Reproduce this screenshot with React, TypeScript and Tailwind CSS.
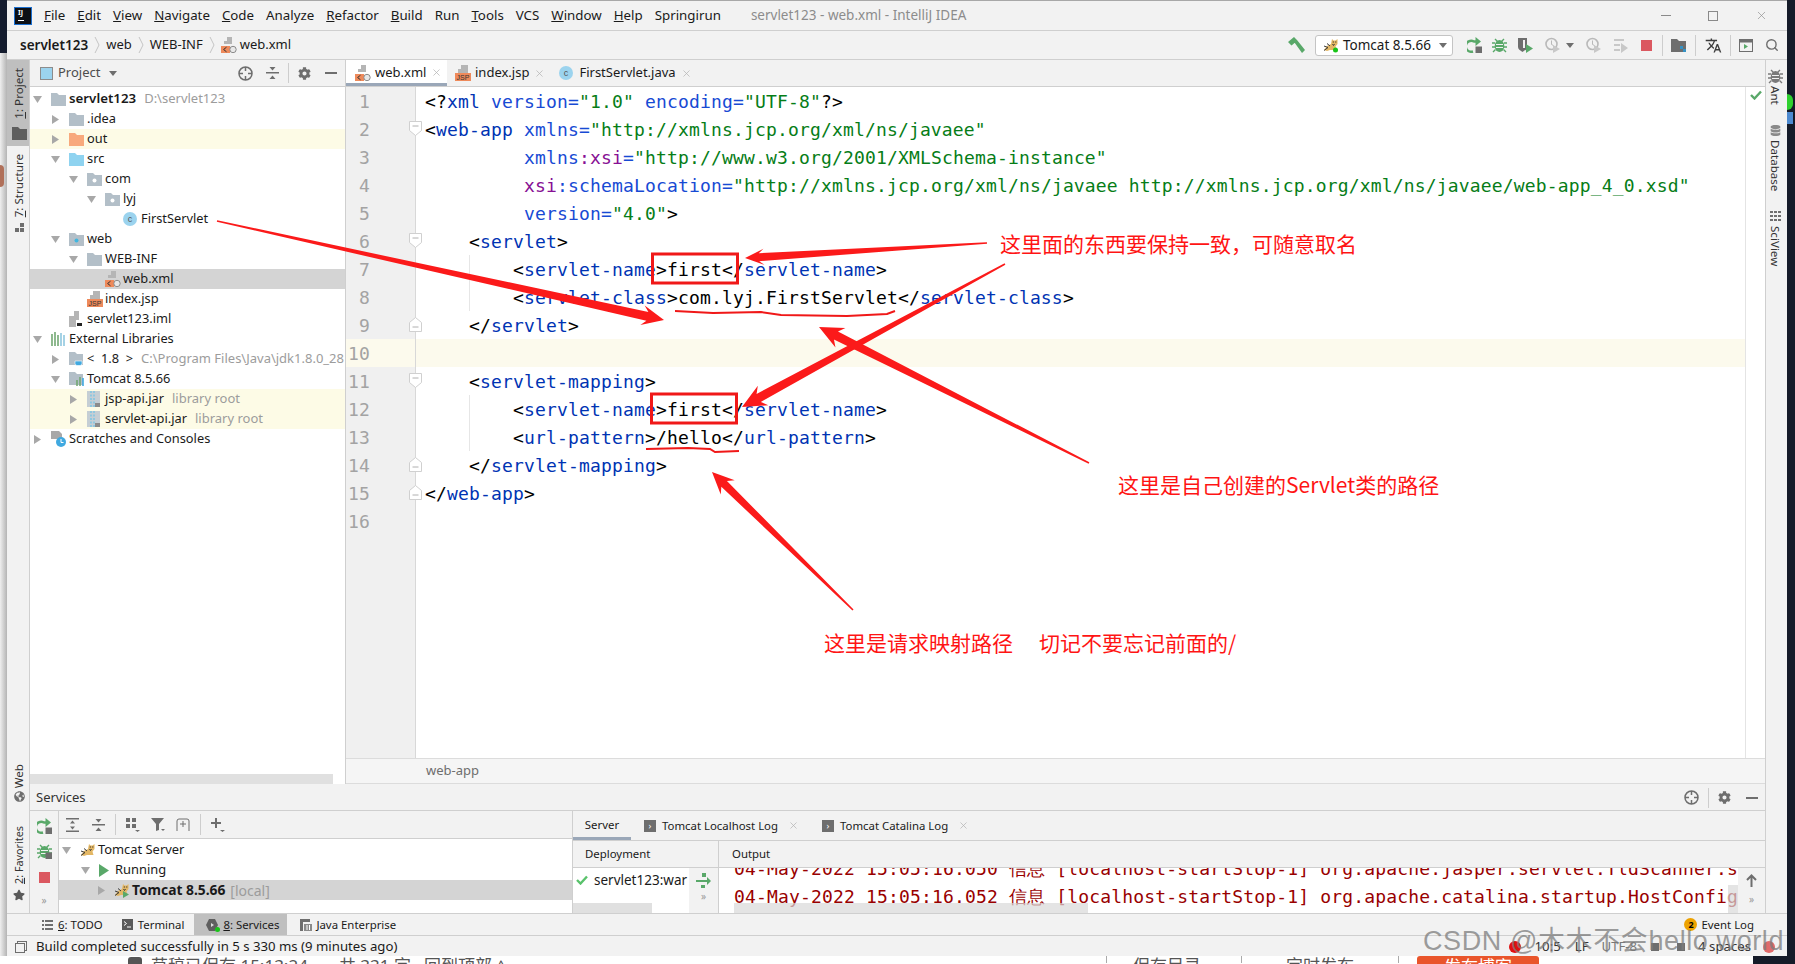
import { ReactNode } from "react";
import { FaCog, FaDatabase, FaGlobeAmericas, FaStar } from "react-icons/fa";
import { MdTranslate } from "react-icons/md";
import { Search, X } from "lucide-react";

const GRAY = "#6e6e6e";

// ---------- small drawn icons ----------
const Arrow = ({ open, className = "" }: { open?: boolean; className?: string }) => (
  <svg width="9" height="9" viewBox="0 0 9 9" className={className}>
    {open ? <path d="M0 1h9L4.5 8z" fill="#a8a8a8" /> : <path d="M1 0l7 4.5L1 9z" fill="#a8a8a8" />}
  </svg>
);

const Folder = ({ color = "#b3bfc8", dot }: { color?: string; dot?: string }) => (
  <svg width="15" height="13" viewBox="0 0 15 13">
    <path d="M0 0h6l2 2h7v11H0z" fill={color} />
    {dot && <circle cx="7.5" cy="7.5" r="2" fill={dot} />}
  </svg>
);

const XmlIcon = () => (
  <svg width="16" height="16" viewBox="0 0 16 16">
    <path d="M6 0h5v6H6zM3 4h8v3H3z" fill="#b5b5b5" />
    <rect x="0" y="9" width="9" height="7" fill="#ee8a5b" />
    <path d="M5.5 10.2L2.6 12.5l2.9 2.3" stroke="#333" strokeWidth="1" fill="none" />
    <circle cx="12" cy="12.5" r="3.2" fill="#e8e8e8" stroke="#8a8a8a" />
  </svg>
);

const JspIcon = () => (
  <svg width="16" height="16" viewBox="0 0 16 16">
    <path d="M6 0h7v8H6zM3 4h10v4H3z" fill="#b5b5b5" />
    <rect x="0" y="8" width="16" height="8" fill="#ee8a5b" />
    <text x="8" y="15" fontSize="7" textAnchor="middle" fill="#333" fontFamily="Liberation Sans">JSP</text>
  </svg>
);

const ClassIcon = () => (
  <svg width="14" height="14" viewBox="0 0 14 14">
    <circle cx="7" cy="7" r="7" fill="#9bd3ee" />
    <text x="7" y="10" fontSize="9" textAnchor="middle" fill="#555" fontFamily="Liberation Sans">c</text>
  </svg>
);

const ImlIcon = () => (
  <svg width="14" height="16" viewBox="0 0 14 16">
    <path d="M5 0h5v16H0V5h5z" fill="#b5b5b5" />
    <rect x="7" y="9" width="7" height="7" fill="#fff" />
    <rect x="8" y="12" width="5" height="3" fill="#222" />
  </svg>
);

const JarIcon = () => (
  <svg width="13" height="16" viewBox="0 0 13 16">
    <rect width="13" height="16" fill="#c5ced4" />
    <path d="M4 0v16M7 0v16" stroke="#8fc7df" strokeWidth="2" strokeDasharray="2 1.5" />
    <rect x="8" y="12" width="5" height="4" fill="#8c8c8c" />
  </svg>
);

const LibIcon = () => (
  <svg width="15" height="14" viewBox="0 0 15 14">
    <path d="M1 2v12M4 0v14M7 3v11" stroke="#73a873" strokeWidth="1.6" />
    <path d="M10 1v13M13 3v11" stroke="#8fc7df" strokeWidth="1.6" />
  </svg>
);

const JdkIcon = () => (
  <svg width="15" height="15" viewBox="0 0 15 15">
    <path d="M0 0h6l2 2h6v11H0z" fill="#b3bfc8" />
    <path d="M6 9h7v2.500a2 2 0 0 1-2 2H8a2 2 0 0 1-2-2z" fill="#40a9e0" stroke="#fff" strokeWidth=".6" />
  </svg>
);

const TomcatFolderIcon = () => (
  <svg width="15" height="14" viewBox="0 0 15 14">
    <path d="M0 0h6l2 2h6v11H0z" fill="#b3bfc8" />
    <path d="M8 8v6M11 5v9" stroke="#73a873" strokeWidth="1.6" />
    <path d="M14 6v8" stroke="#40a9e0" strokeWidth="1.6" />
  </svg>
);

// the cat: tan body, head with two ears at upper right, dark stripes
const TomcatIcon = ({ run, play }: { run?: boolean; play?: boolean }) => (
  <svg width="16" height="16" viewBox="0 0 16 16">
    <path d="M9 2l1.500 1.500h2L14.500 2v5l-2 2.500 1 3.500H7L4 14 1 13l3-4 4-2z" fill="#e3b765" />
    <path d="M1 13.500l4-3M1 9l4 1.500M4 6.500l3 2.500M9.500 7l1 1.500 1-1.500" stroke="#3a3a3a" strokeWidth="1" fill="none" />
    <path d="M9.800 5h1M12.300 5h1" stroke="#222" strokeWidth="1" />
    {run && <circle cx="12.5" cy="13" r="2.5" fill="#18c418" />}
    {play && <path d="M9 9l6 3.500L9 16z" fill="#59a869" />}
  </svg>
);

const Bug = ({ color = "#59a869", box }: { color?: string; box?: boolean }) => (
  <svg width="15" height="15" viewBox="0 0 15 15">
    <path d="M3 1l2.500 2.500M12 1L9.500 3.500M0 5h3M15 5h-3M0 9h3M15 9h-3M1 14l2.500-2.500M14 14l-2.500-2.500" stroke={color} strokeWidth="1.4" />
    <ellipse cx="7.5" cy="8" rx="4.800" ry="6" fill={color} />
    <path d="M4 6.500h7M4 9.500h7" stroke="#f2f2f2" strokeWidth="1" />
    {box && <rect x="8.500" y="8.500" width="6.500" height="6.500" fill="#6e6e6e" />}
  </svg>
);

const Crosshair = () => (
  <svg width="15" height="15" viewBox="0 0 15 15" fill="none" stroke={GRAY} strokeWidth="1.5">
    <circle cx="7.5" cy="7.5" r="6.5" />
    <path d="M7.5 1v4M7.5 10v4M1 7.5h4M10 7.5h4" />
  </svg>
);

const CollapseAll = () => (
  <svg width="13" height="14" viewBox="0 0 13 14" fill={GRAY}>
    <rect y="6" width="13" height="1.5" />
    <path d="M3.5 1h6L6.5 4.5zM3.5 13h6l-3-3.5z" />
  </svg>
);

const ExpandAll = () => (
  <svg width="13" height="14" viewBox="0 0 13 14" fill={GRAY}>
    <rect width="13" height="1.5" />
    <rect y="12.5" width="13" height="1.5" />
    <path d="M4 5.5h5L6.5 2.5zM4 8.5h5l-2.5 3z" />
  </svg>
);

const Minus = () => <span className="block h-[2px] w-3 bg-[#6e6e6e]" />;

const Restart = () => (
  <svg width="15" height="16" viewBox="0 0 15 16" fill="none">
    <path d="M6 14.500A5.500 5.500 0 1 1 7 4.500h3" stroke="#59a869" strokeWidth="2.400" />
    <path d="M8.500 0l5.500 4.500-5.500 4.500z" fill="#59a869" />
    <rect x="8.500" y="9.500" width="6.500" height="6.500" fill="#6e6e6e" />
  </svg>
);

const GrayClock = () => (
  <svg width="15" height="16" viewBox="0 0 15 16" fill="none">
    <circle cx="6.5" cy="7" r="5.5" stroke="#b9b9b9" strokeWidth="1.6" />
    <path d="M6.5 3.5v4l2 1" stroke="#b9b9b9" />
    <path d="M8 8l7 4-7 4z" fill="#c8c8c8" />
  </svg>
);

const Square = ({ size = "w-[11px] h-[11px]" }: { size?: string }) => <span className={`block bg-[#db5860] ${size}`} />;

const Caret = () => <span className="inline-block h-0 w-0 border-x-[4px] border-t-[5px] border-x-transparent border-t-[#6e6e6e]" />;

const Sep = ({ h = "h-[21px]" }: { h?: string }) => <span className={`block w-px bg-[#cdcdcd] ${h}`} />;

const Chev = () => (
  <svg width="6" height="16" viewBox="0 0 6 16" className="mx-[6px]" fill="none" stroke="#c4c4c4">
    <path d="M1 0l4 8-4 8" />
  </svg>
);

const CloseX = () => <X size={11} color="#b4b4b4" strokeWidth={1.6} />;

// ---------- top bars ----------
const MENU: [string, string][] = [
  ["F", "ile"], ["E", "dit"], ["V", "iew"], ["N", "avigate"], ["C", "ode"], ["", "Analyze"], ["R", "efactor"],
  ["B", "uild"], ["", "Run"], ["T", "ools"], ["", "VCS"], ["W", "indow"], ["H", "elp"], ["", "Springirun"],
];

const TitleBar = () => (
  <div className="flex h-[31px] shrink-0 items-center border-t border-b border-t-[#a8a8a8] border-b-[#cfcfcf] bg-[#f2f2f2] text-[13.3px] text-[#1a1a1a]">
    <div className="ml-2 mr-[13px] flex h-[16px] w-[16px] flex-col bg-[#0c0f14] pl-[3px] pt-[1px] text-[7px] font-bold leading-[8px] text-white outline outline-1 outline-[#1b6fd0]">
      IJ<span className="mt-[3px] block h-px w-[6px] bg-white" />
    </div>
    <div className="flex gap-[12px]">
      {MENU.map(([u, rest]) => (
        <span key={rest}>
          {u && <u>{u}</u>}
          {rest}
        </span>
      ))}
    </div>
    <span className="ml-[30px] text-[13.5px] text-[#8c8c8c]">servlet123 - web.xml - IntelliJ IDEA</span>
    <div className="ml-auto mr-[19px] flex items-center gap-[37px]">
      <span className="block h-px w-[10px] bg-[#8a8a8a]" />
      <span className="block h-[10px] w-[10px] border border-[#8a8a8a]" />
      <X size={13} color="#8a8a8a" strokeWidth={1.2} />
    </div>
  </div>
);

const NavBar = () => (
  <div className="flex h-[29px] shrink-0 items-center border-b border-[#cfcfcf] bg-[#f2f2f2] pl-[13px] text-[13px] text-[#1a1a1a]">
    <b className="text-[13.5px] font-semibold">servlet123</b>
    <Chev />
    <span>web</span>
    <Chev />
    <span>WEB-INF</span>
    <Chev />
    <XmlIcon />
    <span className="ml-[3px]">web.xml</span>
    <div className="ml-auto flex items-center">
      <svg width="17" height="16" viewBox="0 0 17 16" fill="#59a869" className="mr-[10px]">
        <path d="M0 5l6-5 3.500 3.500-6 5zM6.500 5.500L9 3l8 10-3 3z" />
      </svg>
      <div className="mr-[14px] flex h-[21px] w-[138px] items-center rounded-[3px] border border-[#c4c4c4] bg-white pl-[7px] text-[13.5px]">
        <TomcatIcon run />
        <span className="ml-[4px]">Tomcat 8.5.66</span>
        <span className="ml-auto mr-[5px] flex"><Caret /></span>
      </div>
      <div className="flex items-center">
        <span className="mr-[10px] flex"><Restart /></span>
        <span className="mr-[11px] flex"><Bug /></span>
        <svg width="15" height="16" viewBox="0 0 15 16" className="mr-[12px]">
          <path d="M0 1h9v9c0 2-2 3.500-4.500 5C2 13.500 0 12 0 10z" fill="#6e6e6e" />
          <path d="M5 3h2v8H5z" fill="#f2f2f2" />
          <path d="M8 7l7 4.500L8 16z" fill="#59a869" />
        </svg>
        <span className="mr-[6px] flex"><GrayClock /></span>
        <span className="mr-[12px] flex"><Caret /></span>
        <span className="mr-[13px] flex"><GrayClock /></span>
        <svg width="14" height="15" viewBox="0 0 14 15" fill="#c8c8c8" className="mr-[13px]">
          <path d="M0 1h10v2H0zM0 6h6v2H0zM0 11h6v2H0zM7 5l7 5-7 5z" />
        </svg>
        <Square />
        <span className="ml-[10px] mr-[8px] flex"><Sep /></span>
        <svg width="15" height="13" viewBox="0 0 15 13">
          <path d="M0 0h6l2 2h7v11H0z" fill="#6e6e6e" />
          <path d="M9 7h3v3H9zM12 10h3v3h-3z" fill="#3592c4" />
        </svg>
        <span className="mx-[9px] flex"><Sep /></span>
        <MdTranslate size={17} color="#3d3d3d" />
        <span className="mx-[8px] flex"><Sep /></span>
        <svg width="14" height="13" viewBox="0 0 14 13" fill="none" className="mr-[12px]">
          <rect x=".5" y=".5" width="13" height="12" stroke={GRAY} />
          <rect x="1" y="1" width="12" height="2.5" fill={GRAY} />
          <path d="M5 5l4 2.5L5 10z" fill="#59a869" />
        </svg>
        <Search size={14} color={GRAY} strokeWidth={2.4} className="mr-[8px]" />
      </div>
    </div>
  </div>
);

// ---------- side tool strips ----------
const VText = ({ children, flip = true, size = "text-[11.6px]" }: { children: ReactNode; flip?: boolean; size?: string }) => (
  <span className={`block whitespace-nowrap text-[#333] [writing-mode:vertical-rl] ${size} ${flip ? "rotate-180" : ""}`}>{children}</span>
);

const LeftStrip = () => (
  <div className="flex w-[23px] shrink-0 flex-col items-stretch border-r border-[#cfcfcf] bg-[#f2f2f2]">
    <div className="flex h-[86px] flex-col items-center gap-[8px] bg-[#bfbfbf] pl-[2px] pt-[8px]">
      <VText><u>1</u>: Project</VText>
      <Folder color="#5e5e5e" />
    </div>
    <div className="mt-[8px] flex flex-col items-center gap-[6px] pl-[2px]">
      <VText><u>7</u>: Structure</VText>
      <svg width="9" height="9" viewBox="0 0 9 9" fill="#6e6e6e"><path d="M5 0h4v4H5zM0 5h4v4H0zM5 5h4v4H5z" /></svg>
    </div>
    <div className="mt-auto flex flex-col items-center gap-[3px] pb-[12px] pl-[2px]">
      <VText>Web</VText>
      <FaGlobeAmericas size={11} color={GRAY} className="mb-[21px]" />
      <VText size="text-[10.8px]"><u>2</u>: Favorites</VText>
      <FaStar size={12} color="#5a5a5a" className="mt-[2px]" />
    </div>
  </div>
);

const RightStrip = () => (
  <div className="flex w-[22px] shrink-0 flex-col items-center border-l border-[#cfcfcf] bg-[#f2f2f2] pr-[2px] pt-[9px]">
    <Bug color="#7a7a7a" />
    <span className="mt-[2px]"><VText flip={false}>Ant</VText></span>
    <FaDatabase size={11} color="#8a8a8a" className="mt-[20px]" />
    <span className="mt-[4px]"><VText flip={false}>Database</VText></span>
    <svg width="11" height="10" viewBox="0 0 11 10" className="mt-[20px]" fill="#6e6e6e">
      <path d="M0 0h3v2H0zM4 0h3v2H4zM8 0h3v2H8zM0 4h3v2H0zM4 4h3v2H4zM8 4h3v2H8zM0 8h3v2H0zM4 8h3v2H4zM8 8h3v2H8z" />
    </svg>
    <span className="mt-[5px]"><VText flip={false}>SciView</VText></span>
  </div>
);

// ---------- project tree ----------
type Row = {
  depth: 0 | 1 | 2 | 3 | 4;
  arrow?: "open" | "closed";
  icon: ReactNode;
  label: ReactNode;
  hint?: string;
  bg?: string;
};

const DEPTH_PAD = ["pl-[3px]", "pl-[21px]", "pl-[39px]", "pl-[57px]", "pl-[75px]"];

const ROWS: Row[] = [
  { depth: 0, arrow: "open", icon: <Folder />, label: <b className="text-[13.3px] font-semibold">servlet123</b>, hint: "D:\\servlet123" },
  { depth: 1, arrow: "closed", icon: <Folder />, label: ".idea" },
  { depth: 1, arrow: "closed", icon: <Folder color="#f8a97c" />, label: "out", bg: "bg-[#fdfbe6]" },
  { depth: 1, arrow: "open", icon: <Folder color="#8fd3f0" />, label: "src" },
  { depth: 2, arrow: "open", icon: <Folder dot="#fff" />, label: "com" },
  { depth: 3, arrow: "open", icon: <Folder dot="#fff" />, label: "lyj" },
  { depth: 4, icon: <ClassIcon />, label: "FirstServlet" },
  { depth: 1, arrow: "open", icon: <Folder dot="#40b6e0" />, label: "web" },
  { depth: 2, arrow: "open", icon: <Folder />, label: "WEB-INF" },
  { depth: 3, icon: <XmlIcon />, label: "web.xml", bg: "bg-[#d4d4d4]" },
  { depth: 2, icon: <JspIcon />, label: "index.jsp" },
  { depth: 1, icon: <ImlIcon />, label: "servlet123.iml" },
  { depth: 0, arrow: "open", icon: <LibIcon />, label: "External Libraries" },
  { depth: 1, arrow: "closed", icon: <JdkIcon />, label: "<\u00a0\u00a01.8\u00a0\u00a0>", hint: "C:\\Program Files\\Java\\jdk1.8.0_281" },
  { depth: 1, arrow: "open", icon: <TomcatFolderIcon />, label: "Tomcat 8.5.66" },
  { depth: 2, arrow: "closed", icon: <JarIcon />, label: "jsp-api.jar", hint: "library root", bg: "bg-[#fdfbe6]" },
  { depth: 2, arrow: "closed", icon: <JarIcon />, label: "servlet-api.jar", hint: "library root", bg: "bg-[#fdfbe6]" },
  {
    depth: 0,
    arrow: "closed",
    icon: (
      <svg width="15" height="16" viewBox="0 0 15 16">
        <path d="M0 0h8l3 3v5H0z" fill="#a8a8a8" />
        <circle cx="10" cy="11" r="5" fill="#40a9e0" />
        <path d="M10 8v3.5h2.5" stroke="#fff" fill="none" />
      </svg>
    ),
    label: "Scratches and Consoles",
  },
];

const ProjectPanel = () => (
  <div className="flex w-[316px] shrink-0 flex-col border-r border-[#cfcfcf] bg-white">
    <div className="flex h-[27px] shrink-0 items-center border-b border-[#cfcfcf] bg-[#f2f2f2] pl-[10px] text-[13px] text-[#4d4d4d]">
      <span className="h-[13px] w-[13px] border border-[#8c8c8c] bg-[#9bd3ee]" />
      <span className="ml-[5px]">Project</span>
      <span className="ml-[9px] flex"><Caret /></span>
      <div className="ml-auto mr-[8px] flex items-center">
        <Crosshair />
        <span className="ml-[13px]"><CollapseAll /></span>
        <span className="mx-[9px] flex"><Sep h="h-[20px]" /></span>
        <FaCog size={13} color={GRAY} />
        <span className="ml-[14px]"><Minus /></span>
      </div>
    </div>
    <div className="flex-1 overflow-hidden pt-[2px] text-[12.8px] text-[#1a1a1a]">
      {ROWS.map((r, i) => (
        <div key={i} className={`flex h-[20px] items-center whitespace-nowrap ${DEPTH_PAD[r.depth]} ${r.bg ?? ""}`}>
          <span className="flex w-[18px] shrink-0 justify-start">{r.arrow && <Arrow open={r.arrow === "open"} />}</span>
          <span className="flex w-[18px] shrink-0 items-center">{r.icon}</span>
          <span>{r.label}</span>
          {r.hint && <span className="ml-[8px] text-[13px] text-[#9c9c9c]">{r.hint}</span>}
        </div>
      ))}
    </div>
    <div className="h-[10px] w-[303px] shrink-0 bg-[#e0e0e0]" />
  </div>
);

// ---------- editor ----------
const TAG = "text-[#0033b3]";
const ATT = "text-[#174ad4]";
const STR = "text-[#067d17]";
const NSP = "text-[#871094]";

type Tok = [string, string?];
type Line = { toks: Tok[]; indent?: string; guide?: boolean; fold?: "open" | "close"; active?: boolean };

const LINES: Line[] = [
  { toks: [["<?"], ["xml", TAG], [" version", ATT], ["=", ATT], ['"1.0"', STR], [" encoding", ATT], ["=", ATT], ['"UTF-8"', STR], ["?>"]] },
  { fold: "open", toks: [["<"], ["web-app", TAG], [" xmlns", ATT], ["=", ATT], ['"http://xmlns.jcp.org/xml/ns/javaee"', STR]] },
  { indent: "pl-[99px]", toks: [["xmlns", ATT], [":xsi", NSP], ["=", ATT], ['"http://www.w3.org/2001/XMLSchema-instance"', STR]] },
  { indent: "pl-[99px]", toks: [["xsi", NSP], [":schemaLocation", ATT], ["=", ATT], ['"http://xmlns.jcp.org/xml/ns/javaee http://xmlns.jcp.org/xml/ns/javaee/web-app_4_0.xsd"', STR]] },
  { indent: "pl-[99px]", toks: [["version", ATT], ["=", ATT], ['"4.0"', STR], [">"]] },
  { fold: "open", indent: "pl-[44px]", toks: [["<"], ["servlet", TAG], [">"]] },
  { guide: true, toks: [["<"], ["servlet-name", TAG], [">first</"], ["servlet-name", TAG], [">"]] },
  { guide: true, toks: [["<"], ["servlet-class", TAG], [">com.lyj.FirstServlet</"], ["servlet-class", TAG], [">"]] },
  { fold: "close", indent: "pl-[44px]", toks: [["</"], ["servlet", TAG], [">"]] },
  { active: true, toks: [] },
  { fold: "open", indent: "pl-[44px]", toks: [["<"], ["servlet-mapping", TAG], [">"]] },
  { guide: true, toks: [["<"], ["servlet-name", TAG], [">first</"], ["servlet-name", TAG], [">"]] },
  { guide: true, toks: [["<"], ["url-pattern", TAG], [">/hello</"], ["url-pattern", TAG], [">"]] },
  { fold: "close", indent: "pl-[44px]", toks: [["</"], ["servlet-mapping", TAG], [">"]] },
  { fold: "close", toks: [["</"], ["web-app", TAG], [">"]] },
  { toks: [] },
];

const MONO = "font-['DejaVu_Sans_Mono',monospace] text-[18px] tracking-[0.16px]";

const FoldMark = ({ kind }: { kind: "open" | "close" }) => (
  <svg width="13" height="15" viewBox="0 0 13 15" className="absolute right-[-7px] top-[6px] z-10">
    <path d={kind === "open" ? "M.5.5h12v9l-6 5-6-5z" : "M.5 14.5h12v-9l-6-5-6 5z"} fill="#fff" stroke="#d0d0d0" />
    <path d={kind === "open" ? "M3.5 5h6" : "M3.5 10h6"} stroke="#b0b0b0" />
  </svg>
);

const Tokens = ({ toks }: { toks: Tok[] }) => (
  <>
    {toks.map(([t, c], i) => (
      <span key={i} className={c ?? "text-black"}>{t}</span>
    ))}
  </>
);

const Editor = () => (
  <div className="flex min-w-0 flex-1 flex-col bg-white">
    <div className="flex h-[27px] shrink-0 items-stretch border-b border-[#cfcfcf] bg-[#f2f2f2] text-[13px] text-[#1a1a1a]">
      <div className="flex w-[101px] items-center border-b-[3px] border-[#9aa7b8] bg-white pl-[9px] pt-[2px]">
        <XmlIcon />
        <span className="ml-[4px]">web.xml</span>
        <span className="ml-[5px]"><CloseX /></span>
      </div>
      <div className="flex items-center pl-[8px]">
        <JspIcon />
        <span className="ml-[4px]">index.jsp</span>
        <span className="ml-[5px]"><CloseX /></span>
      </div>
      <div className="flex items-center pl-[14px]">
        <ClassIcon />
        <span className="ml-[6px]">FirstServlet.java</span>
        <span className="ml-[5px]"><CloseX /></span>
      </div>
    </div>
    <div className="flex min-h-0 flex-1">
      <div className={`flex min-w-0 flex-1 flex-col ${MONO}`}>
        {LINES.map((l, i) => (
          <div key={i} className={`flex h-[28px] shrink-0 items-center whitespace-pre ${l.active ? "bg-[#fcfaed]" : ""}`}>
            <div className={`relative flex h-full w-[70px] shrink-0 items-center justify-end border-r border-[#d8d8d8] pr-[45px] text-[#a3a3a3] ${l.active ? "bg-[#fcfaed]" : "bg-[#f0f0f0]"}`}>
              {i + 1}
              {l.fold && <FoldMark kind={l.fold} />}
            </div>
            {l.guide ? (
              <div className="flex h-full items-center pl-[53px]">
                <div className="flex h-full items-center border-l border-[#e6e6e6] pl-[43px]"><Tokens toks={l.toks} /></div>
              </div>
            ) : (
              <div className="pl-[9px]"><div className={l.indent ?? ""}><Tokens toks={l.toks} /></div></div>
            )}
          </div>
        ))}
        <div className="flex flex-1"><div className="w-[70px] border-r border-[#d8d8d8] bg-[#f0f0f0]" /></div>
      </div>
      <div className="flex w-[20px] shrink-0 justify-center border-l border-[#e4e4e4] pt-[1px]">
        <svg width="12" height="10" viewBox="0 0 12 10" className="mt-[2px]" fill="none" stroke="#59a869" strokeWidth="2.4">
          <path d="M1 5l3.5 3.5L11 1.5" />
        </svg>
      </div>
    </div>
    <div className="flex h-[26px] shrink-0 items-center border-t border-b border-[#dcdcdc] bg-[#f5f5f5] pl-[80px] text-[13px] text-[#6e6e6e]">web-app</div>
  </div>
);

// ---------- services ----------
const Services = () => (
  <div className="flex h-[129px] shrink-0 flex-col bg-[#f2f2f2]">
    <div className="flex h-[27px] shrink-0 items-center border-b border-[#cfcfcf] pl-[6px] pt-px text-[13px] text-[#333]">
      <span>Services</span>
      <div className="ml-auto mr-[7px] flex items-center">
        <Crosshair />
        <span className="mx-[9px] flex"><Sep h="h-[20px]" /></span>
        <FaCog size={13} color={GRAY} />
        <span className="ml-[15px]"><Minus /></span>
      </div>
    </div>
    <div className="flex min-h-0 flex-1">
      <div className="flex w-[29px] shrink-0 flex-col items-center border-r border-[#cfcfcf] pt-[7px]">
        <Restart />
        <span className="mt-[10px] flex"><Bug box /></span>
        <span className="mt-[13px]"><Square /></span>
        <span className="mt-[12px] text-[10px] leading-none text-[#999]">»</span>
      </div>
      <div className="flex w-[513px] shrink-0 flex-col">
        <div className="flex h-[28px] shrink-0 items-center border-b border-[#cfcfcf] pl-[7px]">
          <ExpandAll />
          <span className="ml-[13px]"><CollapseAll /></span>
          <span className="mx-[10px] flex"><Sep /></span>
          <svg width="14" height="14" viewBox="0 0 14 14" fill={GRAY}>
            <path d="M0 0h4v4H0zM6 0h4v4H6zM0 6h4v4H0zM6 6h4v4H6zM9 12h5l-2.5 2z" />
          </svg>
          <svg width="14" height="14" viewBox="0 0 14 14" fill={GRAY} className="ml-[11px]">
            <path d="M0 0h13L8 6v6l-3 1V6zM10 11h4l-2 2z" />
          </svg>
          <svg width="14" height="13" viewBox="0 0 14 13" fill="none" stroke={GRAY} className="ml-[11px]">
            <path d="M1 13V3q0-2 2-2h8q2 0 2 2v10M7 3v6M4 6h6" />
          </svg>
          <span className="mx-[10px] flex"><Sep /></span>
          <svg width="14" height="14" viewBox="0 0 14 14" fill={GRAY}>
            <path d="M4 0h2v4h4v2H6v4H4V6H0V4h4zM9 12h5l-2.5 2z" />
          </svg>
        </div>
        <div className="flex-1 bg-white pt-[1px] text-[12.9px] text-[#1a1a1a]">
          <div className="flex h-[20px] items-center whitespace-nowrap pl-[3px]">
            <span className="w-[18px]"><Arrow open /></span>
            <TomcatIcon />
            <span className="ml-[2px]">Tomcat Server</span>
          </div>
          <div className="flex h-[20px] items-center whitespace-nowrap pl-[22px]">
            <span className="w-[18px]"><Arrow open /></span>
            <svg width="10" height="13" viewBox="0 0 10 13" fill="#59a869" className="mr-[6px]"><path d="M0 0l10 6.500L0 13z" /></svg>
            <span>Running</span>
          </div>
          <div className="flex h-[20px] items-center whitespace-nowrap bg-[#d4d4d4] pl-[38px]">
            <span className="w-[17px]"><Arrow /></span>
            <TomcatIcon play />
            <b className="ml-[2px] text-[13.800px] font-bold">Tomcat 8.5.66</b>
            <span className="ml-[5px] text-[14px] text-[#9c9c9c]">[local]</span>
          </div>
        </div>
      </div>
      <div className="flex min-w-0 flex-1 flex-col border-l border-[#cfcfcf] text-[11.4px] text-[#1a1a1a]">
        <div className="flex h-[30px] shrink-0 items-stretch border-b border-[#cfcfcf]">
          <div className="flex w-[58px] items-center justify-center border-b-[3px] border-[#9aa7b8] pt-[2px]">Server</div>
          <div className="flex items-center pl-[13px]">
            <span className="mr-[6px] flex h-[12px] w-[12px] items-center justify-center bg-[#6e6e6e] text-[9px] text-white">›</span>
            Tomcat Localhost Log
            <span className="ml-[10px]"><CloseX /></span>
          </div>
          <div className="flex items-center pl-[23px]">
            <span className="mr-[6px] flex h-[12px] w-[12px] items-center justify-center bg-[#6e6e6e] text-[9px] text-white">›</span>
            Tomcat Catalina Log
            <span className="ml-[10px]"><CloseX /></span>
          </div>
        </div>
        <div className="flex min-h-0 flex-1">
          <div className="flex w-[146px] shrink-0 flex-col border-r border-[#cfcfcf]">
            <div className="flex h-[27px] shrink-0 items-center border-b border-[#cfcfcf] pl-[12px]">Deployment</div>
            <div className="flex min-h-0 flex-1">
              <div className="relative w-[116px] overflow-hidden bg-white">
                <div className="flex h-[24px] items-center whitespace-nowrap pl-[3px] text-[13.5px]">
                  <svg width="12" height="10" viewBox="0 0 12 10" fill="none" stroke="#59c26b" strokeWidth="2.4" className="mr-[6px] shrink-0"><path d="M1 5l3.5 3.5L11 1.5" /></svg>
                  servlet123:war exploded
                </div>
                <div className="absolute bottom-0 left-0 h-[10px] w-[79px] bg-[#e0e0e0]" />
              </div>
              <div className="flex flex-1 flex-col items-center pt-[5px]">
                <svg width="15" height="15" viewBox="0 0 15 15" fill="#59a869">
                  <path d="M0 7h11V4l4 4-4 4V9H0zM6 0h4v4H6zM5 12h4v3H5z" />
                </svg>
                <span className="mt-[3px] text-[10px] leading-none text-[#999]">»</span>
              </div>
            </div>
          </div>
          <div className="flex min-w-0 flex-1 flex-col">
            <div className="flex h-[27px] shrink-0 items-center border-b border-[#cfcfcf] pl-[13px]">Output</div>
            <div className="flex min-h-0 flex-1">
              <div className={`relative w-[1019px] shrink-0 overflow-hidden bg-white pl-[15px] whitespace-pre text-[#990000] ${MONO}`}>
                <div className="mt-[-13px] h-[28px] leading-[28px]">04-May-2022 15:05:16.050 信息 [localhost-startStop-1] org.apache.jasper.servlet.TldScanner.s</div>
                <div className="h-[28px] leading-[28px]">04-May-2022 15:05:16.052 信息 [localhost-startStop-1] org.apache.catalina.startup.HostConfig</div>
                <div className="absolute bottom-0 left-[15px] h-[10px] w-[354px] bg-[#d8d8d8]/70" />
                <div className="absolute bottom-0 right-0 h-[28px] w-[10px] bg-[#d8d8d8]/70" />
              </div>
              <div className="flex flex-1 flex-col items-center pt-[6px] text-[#6e6e6e]">
                <svg width="11" height="13" viewBox="0 0 11 13" fill="none" stroke={GRAY} strokeWidth="2"><path d="M5.5 13V2M1 6l4.5-4.5L10 6" /></svg>
                <span className="mt-[7px] text-[10px] leading-none text-[#999]">»</span>
              </div>
            </div>
          </div>
        </div>
      </div>
    </div>
  </div>
);

// ---------- bottom bars ----------
const BottomTabs = () => (
  <div className="flex h-[23px] shrink-0 items-stretch border-t border-b border-[#cfcfcf] bg-[#f2f2f2] text-[11.4px] text-[#1a1a1a]">
    <div className="ml-[35px] flex items-center">
      <svg width="11" height="10" viewBox="0 0 11 10" fill={GRAY} className="mr-[5px]"><path d="M0 0h2v2H0zM3 0h8v2H3zM0 4h2v2H0zM3 4h8v2H3zM0 8h2v2H0zM3 8h8v2H3z" /></svg>
      <span><u>6</u>: TODO</span>
    </div>
    <div className="ml-[19px] flex items-center">
      <svg width="11" height="11" viewBox="0 0 11 11" className="mr-[5px]"><rect width="11" height="11" fill="#5a5a5a" /><path d="M2 2.5l2.5 2-2.5 2M5 8h4" stroke="#fff" fill="none" /></svg>
      <span>Terminal</span>
    </div>
    <div className="ml-[10px] flex w-[93px] items-center bg-[#bfbfbf] pl-[12px]">
      <span className="relative mr-[5px] flex">
        <svg width="12" height="12" viewBox="0 0 12 12"><path d="M3 0h6l3 6-3 6H3L0 6z" fill="#5f5f5f" /><path d="M5 4l3 2-3 2z" fill="#ddd" /></svg>
        <span className="absolute bottom-[-1px] right-[-2px] h-[5px] w-[5px] rounded-full bg-[#18c418]" />
      </span>
      <span><u>8</u>: Services</span>
    </div>
    <div className="ml-[13px] flex items-center">
      <svg width="12" height="12" viewBox="0 0 12 12" className="mr-[4px]"><path d="M0 0h10v3H0zM0 3h3v9H0z" fill="#6e6e6e" /><rect x="4" y="5" width="8" height="7" fill="#8a8a8a" /><path d="M7 6v5M9.500 6v5" stroke="#fff" /></svg>
      <span>Java Enterprise</span>
    </div>
    <div className="ml-auto mr-[33px] flex items-center">
      <span className="mr-[4px] flex h-[13px] w-[13px] items-center justify-center rounded-full bg-[#eda200] text-[9px] font-bold text-black">2</span>
      <span>Event Log</span>
    </div>
  </div>
);

const StatusBar = () => (
  <div className="flex h-[20px] shrink-0 items-center bg-[#f2f2f2] pl-[8px] pt-[1px] text-[13.2px] text-[#1a1a1a]">
    <span className="relative mr-[9px] block h-[12px] w-[12px]">
      <span className="absolute left-[2px] top-0 h-[10px] w-[10px] border border-[#6e6e6e]" />
      <span className="absolute bottom-0 left-0 h-[10px] w-[10px] border border-[#6e6e6e] bg-[#f2f2f2]" />
    </span>
    <span>Build completed successfully in 5 s 330 ms (9 minutes ago)</span>
    <div className="ml-auto mr-[12px] flex items-center text-[#333]">
      <span className="mr-[14px] h-[12px] w-[12px] rounded-full bg-[#e01010]" />
      <span>10:5</span>
      <span className="ml-[14px]">LF</span>
      <span className="ml-[13px] text-[#777]">UTF-8</span>
      <span className="ml-[14px] h-[8px] w-[8px] bg-[#6e6e6e]" />
      <span className="ml-[18px] h-[8px] w-[8px] bg-[#6e6e6e]" />
      <span className="ml-[13px]">4 spaces</span>
      <span className="ml-[12px] h-[12px] w-[12px] rounded-full bg-[#e06a6a]" />
    </div>
  </div>
);

// ---------- what shows round the window ----------
const LeftEdge = () => (
  <div className="flex w-[7px] shrink-0 flex-col bg-gradient-to-r from-[#efefef] to-[#b4b4b4]">
    <div className="h-[53px] bg-[#141c2e]" />
    <div className="mt-[112px] h-[22px] w-[4px] rounded-r-full bg-[#b0705a]" />
  </div>
);

const RightEdge = () => (
  <div className="flex w-[8px] shrink-0 flex-col bg-[#151b29] pt-[94px]">
    <div className="h-[16px] w-[6px] rounded-r-full bg-[#2fd12f]" />
    <div className="mt-[2px] h-[12px] w-[6px] bg-[#4d8ad0]" />
  </div>
);

const BottomStrip = () => (
  <div className="relative flex h-[8px] items-start overflow-hidden bg-white text-[17px] leading-[22px] text-[#555]">
    <span className="ml-[128px] mt-[1px] h-[14px] w-[14px] rounded-[3px] bg-[#555]" />
    <span className="ml-[9px] mt-[-1px] whitespace-nowrap">草稿已保存 15:13:24</span>
    <span className="ml-[31px] mt-[-1px] whitespace-nowrap">共 331 字</span>
    <span className="ml-[13px] mt-[-1px] whitespace-nowrap">回到顶部 ^</span>
    <span className="ml-[600px] mt-[-1px] h-[8px] whitespace-nowrap border-l border-[#aaa] pl-[26px]">保存目录</span>
    <span className="ml-[40px] mt-[-1px] h-[8px] whitespace-nowrap border-x border-[#aaa] px-[44px]">定时发布</span>
    <span className="ml-[18px] h-[8px] w-[122px] whitespace-nowrap rounded-t-[3px] bg-[#e9552b] text-center text-white">发布博客</span>
    <span className="ml-auto h-[8px] w-[42px] bg-[#151b29]" />
  </div>
);

// ---------- red notes drawn over the screenshot ----------
const arrowShape = (sx: number, sy: number, tx: number, ty: number, shaft: number, wing: number, len: number) => {
  const d = Math.hypot(tx - sx, ty - sy);
  const ux = (tx - sx) / d;
  const uy = (ty - sy) / d;
  const nx = -uy;
  const ny = ux;
  const at = (back: number, side: number) => `${tx - ux * back + nx * side},${ty - uy * back + ny * side}`;
  const base = (side: number) => `${sx + nx * side},${sy + ny * side}`;
  return [base(0.8), at(len - 5, shaft / 2), at(len, wing), `${tx},${ty}`, at(len, -wing), at(len - 5, -shaft / 2), base(-0.8)].join(" ");
};

const ARROWS: [number, number, number, number, number, number, number][] = [
  [217, 221, 664, 320, 9, 10, 22],
  [987, 243, 745, 258, 8, 8, 19],
  [1005, 264, 742, 407, 9, 11, 24],
  [1089, 463, 819, 327, 9, 11, 24],
  [853, 610, 712, 472, 8, 10, 22],
];

const NOTE = "absolute font-['Noto_Sans_CJK_SC',sans-serif] text-[21px] leading-[28px] text-[#ff1414]";

const Notes = () => (
  <>
    <svg width="1795" height="964" className="pointer-events-none absolute left-0 top-0">
      {ARROWS.map((a, i) => (
        <polygon key={i} points={arrowShape(...a)} fill="#fb1a1a" />
      ))}
      <rect x="652.500" y="254" width="85" height="29" fill="none" stroke="#f01818" strokeWidth="3" />
      <rect x="651.500" y="394" width="85" height="29" fill="none" stroke="#f01818" strokeWidth="3" />
      <path d="M675 311l38 2 48-1 20 3 66 1 40-2 8-3" fill="none" stroke="#f01818" strokeWidth="2" />
      <path d="M646 449l42-1 22 1 5 3 24-1" fill="none" stroke="#f01818" strokeWidth="2" />
    </svg>
    <span className={`${NOTE} left-[1000px] top-[229px]`}>这里面的东西要保持一致，可随意取名</span>
    <span className={`${NOTE} left-[1118px] top-[470px]`}>这里是自己创建的Servlet类的路径</span>
    <span className={`${NOTE} left-[824px] top-[628px]`}>这里是请求映射路径</span>
    <span className={`${NOTE} left-[1039px] top-[628px]`}>切记不要忘记前面的/</span>
    <span className="absolute left-[1423px] top-[924px] whitespace-nowrap font-['Liberation_Sans','Noto_Sans_CJK_SC',sans-serif] text-[27px] leading-[34px] tracking-[0.6px] text-[#7d7d7d]/75">CSDN @木木不会hello world</span>
  </>
);

export default function App() {
  return (
    <div className="relative h-[964px] w-[1795px] overflow-hidden bg-white font-['Noto_Sans','Noto_Sans_CJK_SC',sans-serif]">
      <div className="flex h-[956px]">
        <LeftEdge />
        <div className="flex w-[1780px] shrink-0 flex-col bg-[#f2f2f2]">
          <TitleBar />
          <NavBar />
          <div className="flex min-h-0 flex-1">
            <LeftStrip />
            <div className="flex min-w-0 flex-1 flex-col">
              <div className="flex min-h-0 flex-1">
                <ProjectPanel />
                <Editor />
              </div>
              <Services />
            </div>
            <RightStrip />
          </div>
          <BottomTabs />
          <StatusBar />
        </div>
        <RightEdge />
      </div>
      <BottomStrip />
      <Notes />
    </div>
  );
}
